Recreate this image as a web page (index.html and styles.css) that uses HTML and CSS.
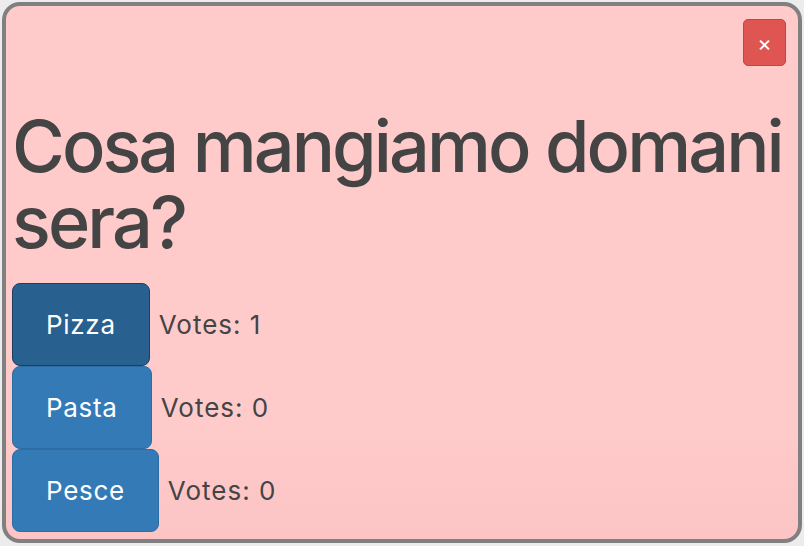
FILE: index.html
```html
<!DOCTYPE html>
<html>
<head>
<meta charset="utf-8">
<link rel="stylesheet" href="styles.css">
</head>
<body>
<div class="panel">
  <div class="top">
    <button class="close" type="button">×</button>
  </div>
  <h1 class="title">Cosa mangiamo domani sera?</h1>
  <div class="options">
    <div class="option"><button class="btn active" type="button">Pizza</button><span class="votes">Votes: 1</span></div>
    <div class="option"><button class="btn" type="button">Pasta</button><span class="votes">Votes: 0</span></div>
    <div class="option"><button class="btn" type="button">Pesce</button><span class="votes">Votes: 0</span></div>
  </div>
</div>
</body>
</html>
```
FILE: styles.css
```css
html, body {
  margin: 0;
  padding: 0;
  background: #ececec;
}
body {
  padding: 2px;
  font-family: Inter, "Open Sans", sans-serif;
  color: #444444;
}
.panel {
  box-sizing: border-box;
  width: 800px;
  height: 541px;
  border: 4px solid #808080;
  border-radius: 18px;
  background: linear-gradient(#ffcaca 80%, #fcc4c4);
  padding: 0 6px;
  overflow: hidden;
}
.top {
  display: flex;
  justify-content: flex-end;
  padding-top: 13px;
}
.close {
  width: 43px;
  height: 47px;
  background: #df5551;
  border: 1px solid #cf403b;
  border-radius: 5px;
  color: #ffffff;
  font-family: Inter, sans-serif;
  font-size: 22px;
  line-height: 1;
  padding: 0;
  margin-right: 6px;
}
.title {
  margin: 42px 0 23px 0;
  font-size: 72px;
  line-height: 76px;
  font-weight: 450;
  letter-spacing: -2.9px;
  color: #444444;
}
.options {
  display: flex;
  flex-direction: column;
}
.option {
  display: flex;
  align-items: center;
  gap: 9px;
}
.btn {
  height: 83px;
  padding: 0 33px;
  background: #337ab7;
  border: 1px solid #2e6da4;
  border-radius: 8px;
  color: #ffffff;
  font-family: Inter, sans-serif;
  font-size: 26px;
  letter-spacing: 0.7px;
}
.btn.active {
  background: #286090;
  border-color: #1c3f5f;
}
.votes {
  font-size: 26px;
  letter-spacing: 1px;
  color: #444444;
}
```
